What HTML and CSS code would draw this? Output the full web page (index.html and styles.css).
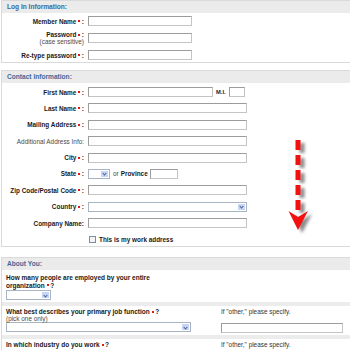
FILE: index.html
```html
<!DOCTYPE html>
<html lang="en">
<head>
    <meta charset="UTF-8">
    <title>Register</title>
    <link rel="stylesheet" href="styles.css">
</head>
<body>
<div class="page">

    <!-- log in -->
    <div class="section login">
        <div class="section-head">Log In Information:</div>
        <div class="section-body">
            <div class="row">
                <label class="lbl">Member Name<b class="req"></b>:</label>
                <input class="text short" type="text">
            </div>
            <div class="row">
                <label class="lbl">Password<b class="req"></b>:<span class="note">(case sensitive)</span></label>
                <input class="text short" type="password">
            </div>
            <div class="row">
                <label class="lbl">Re-type password<b class="req"></b>:</label>
                <input class="text short" type="password">
            </div>
        </div>
    </div>

    <!-- contact -->
    <div class="section contact">
        <div class="section-head">Contact Information:</div>
        <div class="section-body">
            <div class="row">
                <label class="lbl">First Name<b class="req"></b>:</label>
                <div class="inline">
                    <input class="text first" type="text">
                    <span class="mi">M.I.</span>
                    <input class="text tiny" type="text">
                </div>
            </div>
            <div class="row">
                <label class="lbl">Last Name<b class="req"></b>:</label>
                <input class="text long" type="text">
            </div>
            <div class="row">
                <label class="lbl">Mailing Address<b class="req"></b>:</label>
                <input class="text long" type="text">
            </div>
            <div class="row">
                <label class="lbl plain">Additional Address Info:</label>
                <input class="text long" type="text">
            </div>
            <div class="row">
                <label class="lbl">City<b class="req"></b>:</label>
                <input class="text long" type="text">
            </div>
            <div class="row">
                <label class="lbl">State<b class="req"></b>:</label>
                <div class="inline">
                    <div class="select state"><span class="drop"></span></div>
                    <span class="or">or</span> <span class="prov">Province</span>
                    <input class="text province" type="text">
                </div>
            </div>
            <div class="row">
                <label class="lbl">Zip Code/Postal Code<b class="req"></b>:</label>
                <input class="text long" type="text">
            </div>
            <div class="row">
                <label class="lbl">Country<b class="req"></b>:</label>
                <div class="select country"><span class="drop"></span></div>
            </div>
            <div class="row">
                <label class="lbl">Company Name:</label>
                <input class="text long" type="text">
            </div>
            <div class="row">
                <span></span>
                <label class="check"><span class="box"></span>This is my work address</label>
            </div>
        </div>
    </div>

    <!-- about you -->
    <div class="section about">
        <div class="section-head">About You:</div>
        <div class="question">
            <div class="q-main">
                <div class="q-text">How many people are employed by your entire <span class="nowrap">organization<b class="req"></b>?</span></div>
                <div class="select size"><span class="drop"></span></div>
            </div>
        </div>
        <div class="question">
            <div class="q-main">
                <div class="q-text">What best describes your primary job function<b class="req"></b>?</div>
                <div class="q-note">(pick one only)</div>
                <div class="select wide"><span class="drop"></span></div>
            </div>
            <div class="q-other">
                <div class="other-text">If "other," please specify.</div>
                <input class="text other" type="text">
            </div>
        </div>
        <div class="question">
            <div class="q-main">
                <div class="q-text">In which industry do you work<b class="req"></b>?</div>
                <div class="select wide"><span class="drop"></span></div>
            </div>
            <div class="q-other">
                <div class="other-text">If "other," please specify.</div>
                <input class="text other" type="text">
            </div>
        </div>
    </div>

    <!-- red hint arrow drawn over the form -->
    <svg class="hint-arrow" width="30" height="100" viewBox="0 0 30 100">
        <line x1="14" y1="4" x2="14" y2="78" stroke="#f21010" stroke-width="5" stroke-dasharray="10 5"/>
        <polygon points="4.5,75 14,81 24,75 14,94" fill="#f21010"/>
    </svg>
</div>
</body>
</html>
```

FILE: styles.css
```css
/* general */
html, body {
    margin: 0;
    padding: 0;
    background: #fff;
    overflow: hidden;
}

body {
    font-family: "Liberation Sans", Arial, sans-serif;
    font-size: 6.4px;
    color: #1a1a1a;
}

.page {
    position: relative;
    width: 420px;
    height: 350px;
    overflow: hidden;
    padding-left: 1px;
}

/* section boxes */
.section {
    border: 1px solid #dadada;
}

.section-head {
    background-color: #ebebeb;
    height: 12px;
    line-height: 12px;
    padding-left: 5px;
    color: #40699a;
    font-weight: bold;
    font-size: 6.6px;
}

.login {
    height: 61px;
    margin-bottom: 7px;
}

.contact {
    margin-bottom: 10px;
}

.login .section-body {
    padding: 3px 0 2px;
    display: flex;
    flex-direction: column;
    gap: 5px;
}

.contact .section-body {
    padding: 4px 0 2px;
    display: flex;
    flex-direction: column;
    gap: 6.375px;
}

.row {
    display: grid;
    grid-template-columns: 82px 1fr;
    column-gap: 4px;
    align-items: center;
    min-height: 10px;
}

.lbl {
    text-align: right;
    font-weight: bold;
    line-height: 7px;
}

.lbl.plain {
    font-weight: normal;
    color: #4a4a4a;
}

.note {
    display: block;
    font-weight: normal;
    color: #4a4a4a;
}

/* red required mark */
.req {
    display: inline-block;
    width: 2px;
    height: 2px;
    background: #e01818;
    margin: 0 1.5px 0 2px;
    vertical-align: 1.5px;
}

/* text inputs */
.text {
    box-sizing: border-box;
    height: 10px;
    margin: 0;
    padding: 0;
    border: 1px solid #9c9c9c;
    border-right-color: #c4c4c4;
    border-bottom-color: #c4c4c4;
    background: #fff;
    display: block;
}

.short { width: 104px; }
.long { width: 159px; }
.first { width: 125px; }
.tiny { width: 16px; }
.province { width: 28px; }
.other { width: 122px; }

.inline {
    display: flex;
    align-items: center;
}

.mi {
    font-weight: bold;
    margin: 0 3px 0 3px;
    font-size: 5.8px;
}

.or {
    color: #4a4a4a;
    margin-left: 3px;
}

.prov {
    font-weight: bold;
    margin: 0 2px 0 2px;
}

/* fake selects */
.select {
    box-sizing: border-box;
    height: 10px;
    border: 1px solid #a9b4c2;
    background: #fff;
    display: flex;
    justify-content: flex-end;
    padding: 1px;
}

.drop {
    width: 7px;
    background: #c6d5f6;
    position: relative;
}

.drop::after {
    content: "";
    position: absolute;
    left: 2px;
    top: 1.5px;
    width: 2px;
    height: 2px;
    border-right: 1px solid #4d6391;
    border-bottom: 1px solid #4d6391;
    transform: rotate(45deg);
}

.state { width: 22px; }
.country { width: 159px; }
.size { width: 45px; margin-top: 1px; }
.wide { width: 185px; margin-top: 1px; }

/* checkbox */
.check {
    display: flex;
    align-items: center;
    font-weight: bold;
    padding-left: 1px;
}

.box {
    box-sizing: border-box;
    width: 7px;
    height: 7px;
    border: 1px solid #7c8ea3;
    background: #f4f4f4;
    margin-right: 3px;
}

/* about you questions */
.about {
    border-bottom: none;
}

.about .section-head {
    margin-bottom: 4px;
}

.question {
    display: grid;
    grid-template-columns: 188px 122px;
    column-gap: 27px;
    padding: 0 0 2px 4px;
    border-bottom: 4px solid #ececec;
    margin-bottom: 2px;
}

.q-text {
    font-weight: bold;
    font-size: 6.5px;
    line-height: 7.5px;
    max-width: 175px;
}

.nowrap {
    white-space: nowrap;
}

.q-note {
    color: #4a4a4a;
    line-height: 5.5px;
}

.other-text {
    color: #333;
    line-height: 7px;
    margin-bottom: 8px;
}

/* red arrow */
.hint-arrow {
    position: absolute;
    left: 284px;
    top: 136px;
    filter: drop-shadow(4px 3px 1.5px rgba(0, 0, 0, 0.45));
}
```
